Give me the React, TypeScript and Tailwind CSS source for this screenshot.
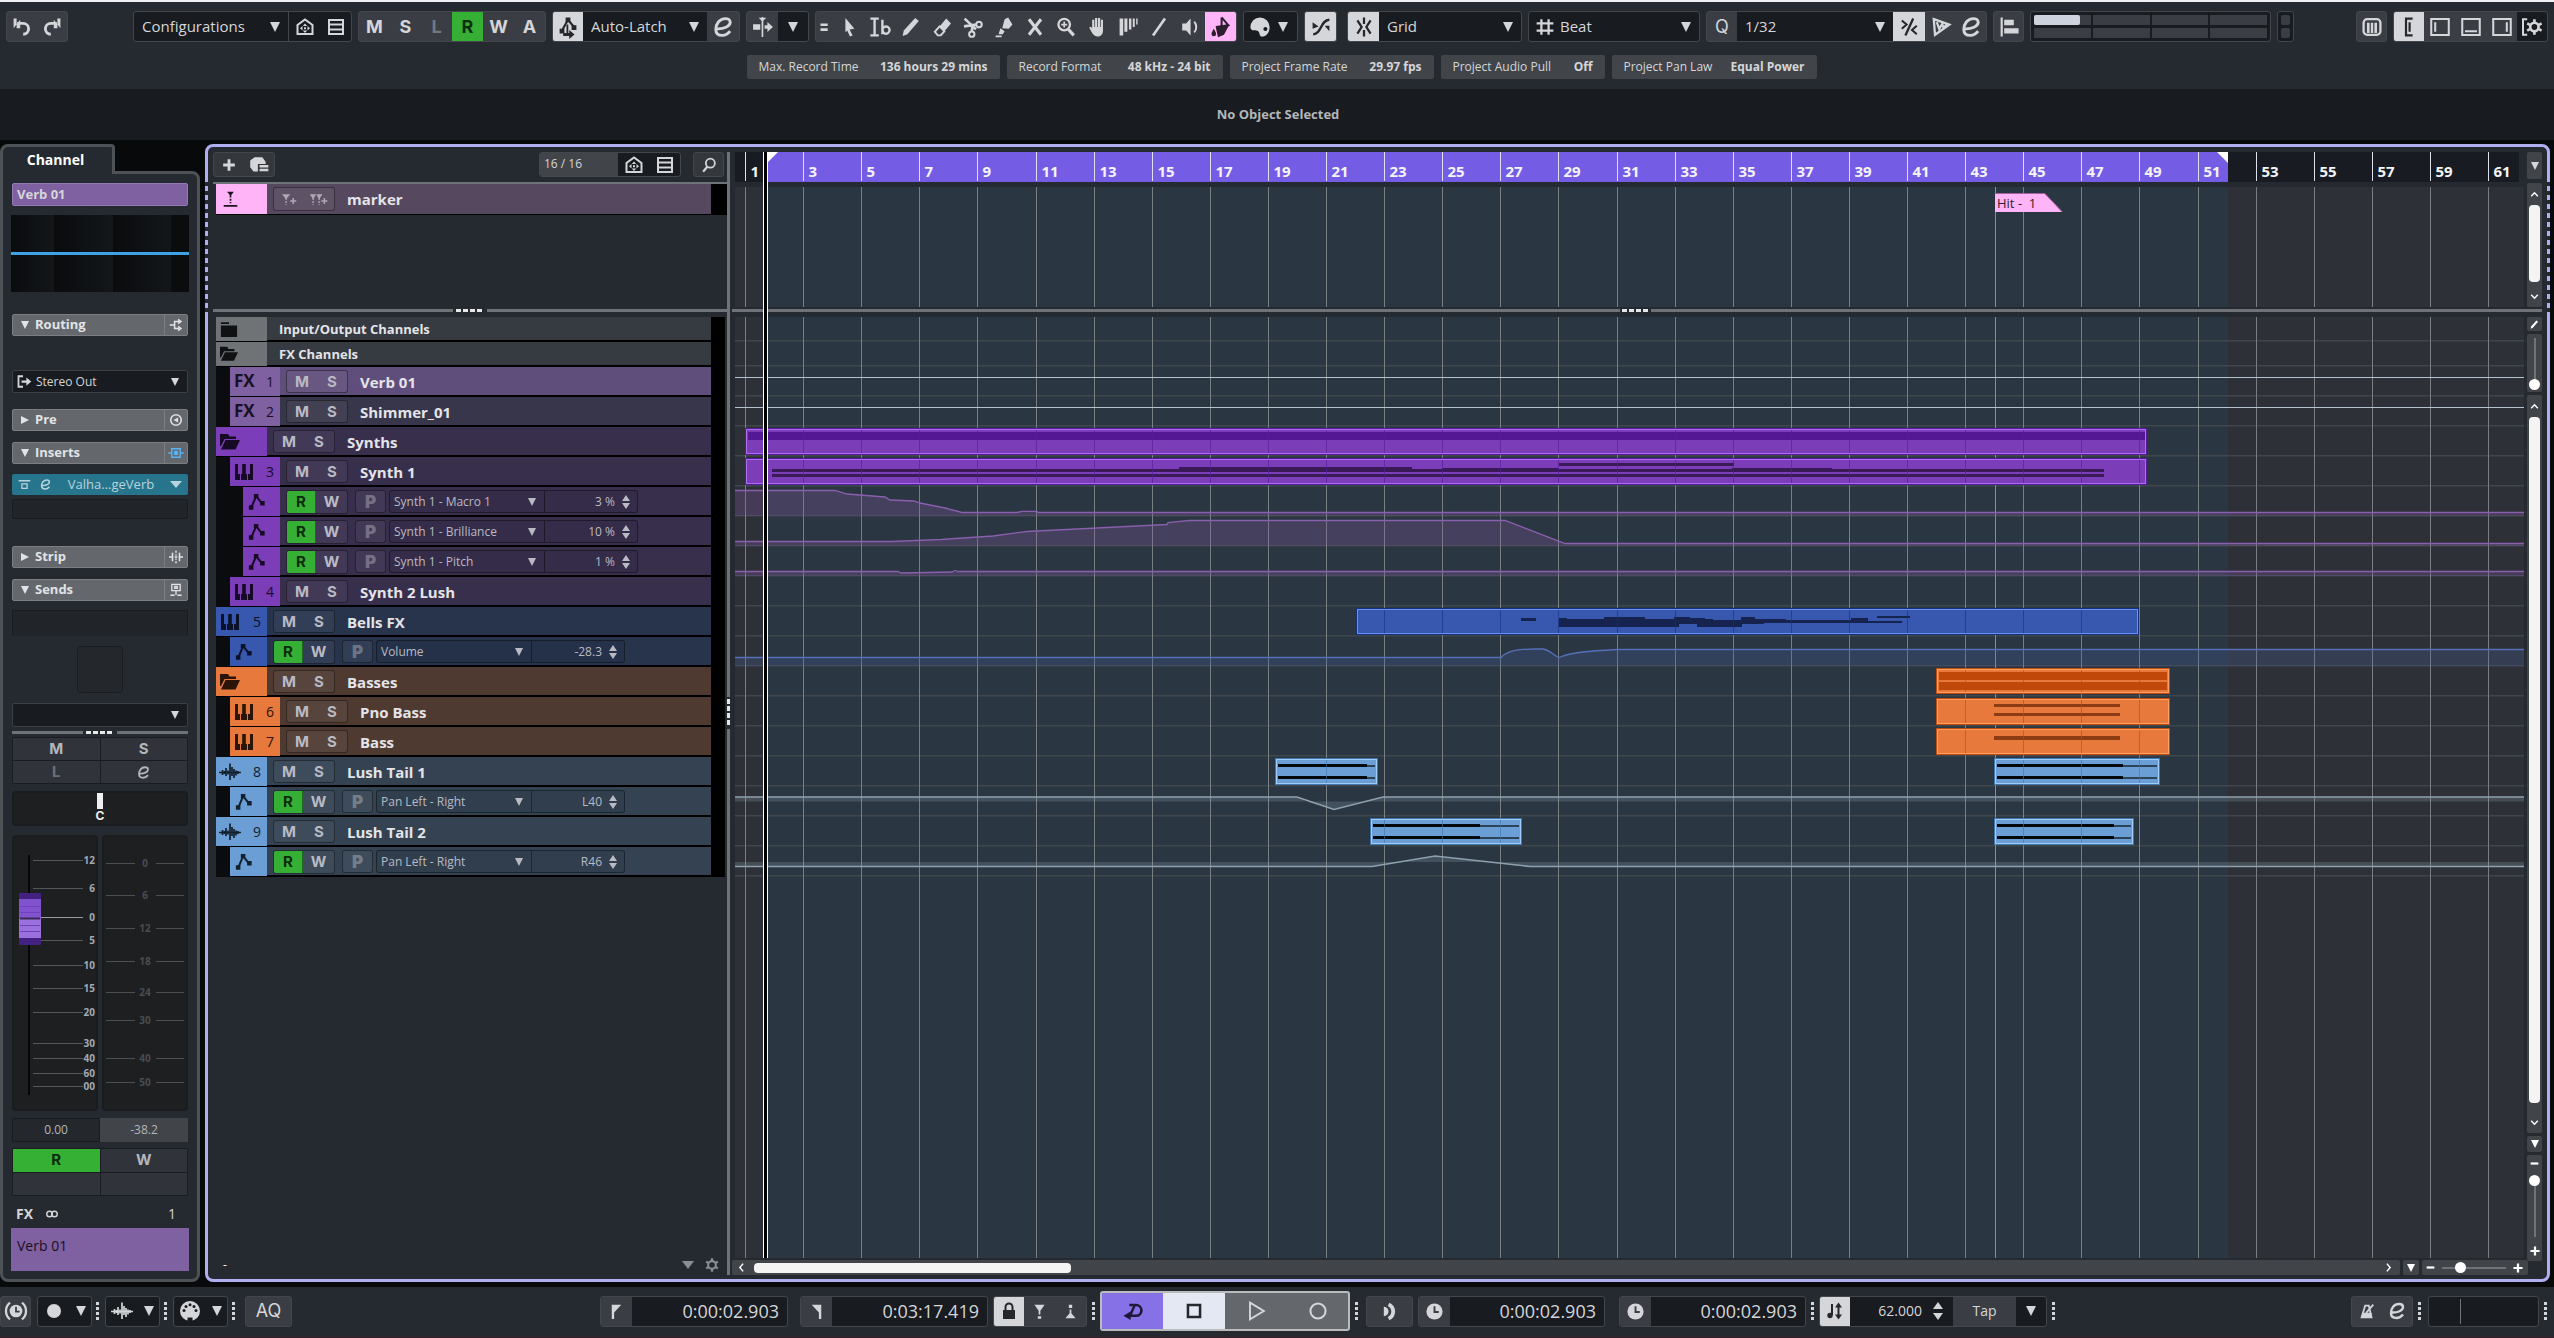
import type { ReactNode } from "react";
import clsx from "clsx";

const BOX = "rounded-[3px] border border-[#43474b] overflow-hidden";

const glyphs: Record<string, ReactNode> = {
  undo: (
    <>
      <path d="M6 7h5a4.500 4.500 0 0 1 0 9" fill="none" stroke="currentColor" strokeWidth="2.400" />
      <path d="M8.500 4v7H3z M3 3v8h2.500V3z" />
    </>
  ),
  redo: (
    <>
      <path d="M14 7H9a4.500 4.500 0 0 0 0 9" fill="none" stroke="currentColor" strokeWidth="2.400" />
      <path d="M11.500 4v7H17z M17 3v8h-2.500V3z" />
    </>
  ),
  agents: (
    <>
      <path d="M2.500 17V8L10 2.500 17.500 8v9z" fill="none" stroke="currentColor" strokeWidth="2" />
      <path d="M10 6.500l2.200 2.500H7.800zM10 16l2.200-2.500H7.800zM5 11.300l2.500-2.200v4.400zM15 11.300l-2.500-2.200v4.400zM9 10.300h2v2H9z" />
    </>
  ),
  list: (
    <path d="M3 3h14v14H3zM3 7.500h14M3 12.500h14" fill="none" stroke="currentColor" strokeWidth="2" />
  ),
  metro: (
    <>
      <path d="M5 13l5-9 5 6" fill="none" stroke="currentColor" strokeWidth="1.800" />
      <path d="M8 2h4v4H8zM3 11.500h4v4H3zM13 8.500h4v4h-4z" />
      <path d="M9.500 8v7" stroke="currentColor" strokeWidth="1.500" />
      <path d="M6 15h5v-2.500l4.500 3.700L11 20v-2.500H6z" />
    </>
  ),
  edit: (
    <path
      d="M4.500 11.500c6 .5 11.500-2 11.500-5.500 0-2-2-3-4-3-5 0-8 4.500-8 9 0 3 2 5 5.500 5 2.500 0 4.500-1 6.500-3.500"
      fill="none"
      stroke="currentColor"
      strokeWidth="2.400"
    />
  ),
  scroll: (
    <>
      <path d="M9.500 1v18" stroke="currentColor" strokeWidth="1.500" />
      <path d="M1 7.500h6.500v5H1zM11.500 8.500H14V5.500l5 4.500-5 4.500v-3h-2.500zM6 1.500h7L9.500 5z" />
    </>
  ),
  menu: <path d="M5 6h8v3H5zM5 11.500h8v3H5z" />,
  arrow: <path d="M7 2.500l7.500 9-4 .5 2.500 5-2.200 1-2.300-5L7 14.500z" />,
  range: (
    <>
      <path d="M2 3h7M2 17h7M5.500 3v14" fill="none" stroke="currentColor" strokeWidth="2" />
      <path d="M12 4v12M12 12.500a3 3 0 1 1 0 .1" fill="none" stroke="currentColor" strokeWidth="2" />
    </>
  ),
  pencil: <path d="M3 17.500l1-4.500L13.500 2.500l3 2.500L7 16z" />,
  erase: (
    <>
      <path d="M8 9.500L13.500 3l4 4-5.500 6.500z" />
      <path d="M8 9.500l-4 4.500 2.500 3H9l3-3.500z" fill="none" stroke="currentColor" strokeWidth="1.600" />
    </>
  ),
  split: (
    <>
      <path d="M3 3l9.500 9M2.500 9.500l10-1.500M9.500 9l-.5 5" stroke="currentColor" strokeWidth="2.200" />
      <circle cx="15" cy="8" r="2.300" fill="none" stroke="currentColor" strokeWidth="1.700" />
      <circle cx="9" cy="16" r="2.200" fill="none" stroke="currentColor" strokeWidth="1.700" />
    </>
  ),
  glue: <path d="M10.500 3.500L13.500 2l3.500 6-3 3.500-5.500-.5zM7 11l3.500 2.500L9 16H5.500zM3 17h5v1.500H3z" />,
  mute: <path d="M5 3.500l10 13M15 3.500l-10 13" stroke="currentColor" strokeWidth="2.600" />,
  zoom: (
    <>
      <circle cx="8.500" cy="8" r="4.800" fill="none" stroke="currentColor" strokeWidth="1.900" />
      <path d="M12 12l4.500 5" stroke="currentColor" strokeWidth="2.600" />
      <path d="M6 8h5M8.500 5.500v5" stroke="currentColor" strokeWidth="1.400" />
    </>
  ),
  hand: <path d="M6 4h1.800v6h.6V2.500h1.800V10h.6V2.500h1.800V10h.6V4H15v9c0 3-1.500 5-4.500 5C7 18 6 15 3.500 10.500l1.500-.8L6 11z" />,
  comp: <path d="M3 3h3v14H3zM7 3h2.500v11H7zM10.800 3h2v9h-2zM14 3h1.600v7H14zM16.800 3H18v5h-1.200z" />,
  line: <path d="M5 17L15 3" stroke="currentColor" strokeWidth="2.200" />,
  speaker: (
    <>
      <path d="M3.500 7h3.300L10.500 3v14l-3.700-4H3.500z" />
      <path d="M13.500 5.500c2.300 2.500 2.300 6.500 0 9" fill="none" stroke="currentColor" strokeWidth="1.600" />
    </>
  ),
  bucket: (
    <>
      <path d="M10.500 2v6.500M10.500 2l5.500 6.500-10 1.500" fill="none" stroke="currentColor" strokeWidth="1.700" />
      <path d="M5.500 9.500l11.500-1.500-4.500 8.500-5 2zM4 11.500c1 2 1.900 3 1.900 4.300a1.900 1.900 0 1 1-3.800 0C2.100 14.500 3 13.500 4 11.500z" />
    </>
  ),
  palette: (
    <path
      fillRule="evenodd"
      d="M10 2a8 8 0 0 1 8 8c0 5-3 8-6.500 8-2 0-1.500-3-3-4.500-1.500-1-6 .5-6.500-3A8 8 0 0 1 10 2zm4.500 8a1.700 1.700 0 1 0 0 3.400 1.700 1.700 0 0 0 0-3.400z"
    />
  ),
  cross: (
    <>
      <path d="M3.500 16c7 0 6-12 13.500-12" fill="none" stroke="currentColor" strokeWidth="2" />
      <path d="M3 6l5 3.500-5 2zM17 13.500l-4-4.500h4z" />
    </>
  ),
  snap: (
    <path
      d="M10 2v5.500M10 12.500V18M4.500 4.500L8 10l-3.500 5.500M15.500 4.500L12 10l3.500 5.500"
      fill="none"
      stroke="currentColor"
      strokeWidth="1.900"
    />
  ),
  grid: <path d="M7 3.500v13M13 3.500v13M3 7h14M3 13h14" stroke="currentColor" strokeWidth="1.900" />,
  percent: (
    <>
      <path d="M13.500 3L7 17" stroke="currentColor" strokeWidth="1.900" />
      <path d="M4 4.500L8 8l-4 3.500M16.500 9l-4 3.500 4 3.500" fill="none" stroke="currentColor" strokeWidth="1.700" />
    </>
  ),
  iq: (
    <path d="M4 3.500l13 4.500L5 16.500zM6.500 6l2 5.500 2.500-4 1 3 3.500-3" fill="none" stroke="currentColor" strokeWidth="1.900" />
  ),
  align: <path d="M3 2h1.800v16H3zM6 4h8v4.500H6zM6 11h12v4.500H6z" />,
  keys: (
    <>
      <rect x="3" y="3.500" width="14" height="13" rx="3" fill="none" stroke="currentColor" strokeWidth="1.900" />
      <path d="M5.800 6.500H8v8.500H5.800zM9 6.500h2V15H9zM12 6.500h2.200V15H12z" />
    </>
  ),
  zoneBracket: <path d="M13 3H7.500v14H13M10.500 6v8" fill="none" stroke="currentColor" strokeWidth="1.800" />,
  zoneLeft: <path d="M2.700 3.300h14.600v13.400H2.700zM6 6v8" fill="none" stroke="currentColor" strokeWidth="1.700" />,
  zoneBottom: <path d="M2.700 3.300h14.600v13.400H2.700zM5 13.500h10" fill="none" stroke="currentColor" strokeWidth="1.700" />,
  zoneRight: <path d="M2.700 3.300h14.600v13.400H2.700zM14 6v8" fill="none" stroke="currentColor" strokeWidth="1.700" />,
  gear: (
    <>
      <circle cx="10" cy="10" r="4.800" fill="none" stroke="currentColor" strokeWidth="2.600" />
      <path
        d="M10 1.500v3M10 15.500v3M2.600 5.800l2.600 1.500M14.800 12.700l2.600 1.500M2.600 14.200l2.600-1.500M14.800 7.300l2.600-1.500"
        stroke="currentColor"
        strokeWidth="2.800"
      />
    </>
  ),
  setup: (
    <>
      <path d="M6 3.500H2.500v13H6" fill="none" stroke="currentColor" strokeWidth="1.700" />
      <circle cx="12" cy="10" r="3.500" fill="none" stroke="currentColor" strokeWidth="2.200" />
      <path d="M12 3.500V6M12 14v2.500M6 7l2.200 1.200M15.800 11.800L18 13M6 13l2.200-1.200M15.800 8.200L18 7" stroke="currentColor" strokeWidth="2.200" />
    </>
  ),
  plus: <path d="M10 3.500v13M3.500 10h13" stroke="currentColor" strokeWidth="3.200" />,
  minus: <path d="M3 10h14" stroke="currentColor" strokeWidth="4" />,
  preset: <path d="M6 3h7l3 4v2H9v7H5l-3-4V6zM10.500 10h8v2.200h-8zM10.500 13.500h8v2.200h-8z" />,
  search: (
    <>
      <circle cx="11.500" cy="8" r="5" fill="none" stroke="currentColor" strokeWidth="2" />
      <path d="M8 12l-4.500 5.500" stroke="currentColor" strokeWidth="2.400" />
    </>
  ),
  marker: (
    <>
      <path d="M6 1h8l-4 5zM2 16.500h16v2H2z" />
      <path d="M10 5v9.500" stroke="currentColor" strokeWidth="2" strokeDasharray="2.500 1.500" />
    </>
  ),
  addMarker: (
    <>
      <path d="M0 3h11L5.500 9.500z" />
      <path d="M5.500 8v9" stroke="currentColor" strokeWidth="1.700" strokeDasharray="2.500 1.500" />
      <path d="M15 8v8M11 12h8" stroke="currentColor" strokeWidth="2" />
    </>
  ),
  addCycle: (
    <>
      <path d="M-3 3h8.500L1.500 9.500zM5.500 3H14L9.500 9.500z" />
      <path d="M1.500 8v9M9.500 8v9" stroke="currentColor" strokeWidth="1.700" strokeDasharray="2.500 1.500" />
      <path d="M16.500 8v8M12.500 12h8" stroke="currentColor" strokeWidth="2" />
    </>
  ),
  folder: <path d="M1 2.500h9v2H1zM1 6h18v13H1z" />,
  folderOpen: (
    <>
      <path d="M0 2h8l1.500 2.500H16V7H4.500L1 14H0z" />
      <path d="M5.500 8H20l-4.500 9.500H1z" />
    </>
  ),
  piano: <path d="M1 2h3v10h2V18H1zM7 12h1.200V2h3.600v10H13v6H7zM14 12h2V2h3v16h-5z" />,
  node: (
    <>
      <path d="M4 15.500l5-12 6.500 8" fill="none" stroke="currentColor" strokeWidth="2.200" />
      <path d="M6.500 1h5v4.500h-5zM1 13.500h5v5H1zM13.500 9h5v5h-5z" />
    </>
  ),
  wave: (
    <>
      <path d="M-1 10.500h22" stroke="currentColor" strokeWidth="1.400" />
      <path
        d="M2.500 8v5M4.500 9v3M6 6v8M8 8.500v4M10 1.500V18M12 5v9M14 7v9M16 8.500v5M18 9v3"
        stroke="currentColor"
        strokeWidth="1.700"
      />
    </>
  ),
  routing: (
    <path d="M1 10h7M15 5H8v10h7M13 2l4 3-4 3M13 12l4 3-4 3" fill="none" stroke="currentColor" strokeWidth="2.200" />
  ),
  output: (
    <>
      <path d="M8 3H2v14h6" fill="none" stroke="currentColor" strokeWidth="2.400" />
      <path d="M6 8.500h6.500V4.500L19 10l-6.500 5.500v-4H6z" />
    </>
  ),
  pre: (
    <>
      <circle cx="10" cy="10" r="7.500" fill="none" stroke="currentColor" strokeWidth="2.200" />
      <path d="M13 6.500v7L6.500 10z" />
    </>
  ),
  insert: (
    <>
      <path d="M-1 10h5M16 10h5M4 4h12v12H4z" fill="none" stroke="currentColor" strokeWidth="2" />
      <path d="M7 7h6v6H7z" />
    </>
  ),
  strip: (
    <path d="M0 10h4M16 10h4M5 4v12M15 4v12M8 10h4M10 1v3M10 6v2M10 12v2M10 16v3" stroke="currentColor" strokeWidth="2.200" />
  ),
  send: (
    <path d="M4 2h12v9H4zM7 5h6M7 7.500h6M10 11v6M2 17.500h6M12 17.500h6" fill="none" stroke="currentColor" strokeWidth="1.900" />
  ),
  bypass: <path d="M1 3h18v2.200H1zM5 8h10v9H5zM7 10v5h6v-5z" fillRule="evenodd" />,
  link: (
    <>
      <circle cx="6.500" cy="10" r="4" fill="none" stroke="currentColor" strokeWidth="2" />
      <circle cx="13.500" cy="10" r="4" fill="none" stroke="currentColor" strokeWidth="2" />
    </>
  ),
  system: (
    <>
      <circle cx="10" cy="10" r="5.300" />
      <path d="M10 6.500V10.500h3" fill="none" stroke="#3a3e44" strokeWidth="1.500" />
      <path d="M5 3a9 9 0 0 0 0 14M15 3a9 9 0 0 1 0 14" fill="none" stroke="currentColor" strokeWidth="1.900" />
    </>
  ),
  dot: <circle cx="10" cy="10" r="7" />,
  midi: (
    <>
      <circle cx="10" cy="10" r="10" />
      <g fill="#181b1f">
        <circle cx="4" cy="9.500" r="1.500" />
        <circle cx="6" cy="5.500" r="1.500" />
        <circle cx="10" cy="3.700" r="1.500" />
        <circle cx="14" cy="5.500" r="1.500" />
        <circle cx="16" cy="9.500" r="1.500" />
        <path d="M7.500 16.500h5v4h-5z" />
      </g>
    </>
  ),
  locL: <path d="M5 3h10L7.500 11v7H5z" />,
  locR: <path d="M15 3H5l7.500 8v7H15z" />,
  lock: (
    <>
      <path d="M4 9h12v9H4z" />
      <path d="M6.500 9V6a3.500 3.500 0 0 1 7 0v3" fill="none" stroke="currentColor" strokeWidth="2" />
    </>
  ),
  punchIn: <path d="M4 2h12l-5 7v4.500H9V9zM8 15.500h4v3H8z" />,
  punchOut: <path d="M4 18h12l-5-6V7.500H9V12zM8 2h4v4H8z" />,
  loop: (
    <>
      <path d="M7 5h5.500a4.500 4.500 0 0 1 0 9H6" fill="none" stroke="currentColor" strokeWidth="2.200" />
      <path d="M11.500 5L7.500 14" stroke="currentColor" strokeWidth="2" />
      <path d="M8 10.500v7L2 14z" />
    </>
  ),
  stop: <path d="M4.500 4.500h11v11h-11z" fill="none" stroke="currentColor" strokeWidth="2.300" />,
  play: <path d="M5 3l11.500 7L5 17z" fill="none" stroke="currentColor" strokeWidth="1.600" />,
  record: <circle cx="10" cy="10" r="6.300" fill="none" stroke="currentColor" strokeWidth="1.700" />,
  feedback: (
    <>
      <path d="M4 5a5 5 0 0 1 0 10z" />
      <path d="M9 2.500c6.500 3 6.500 12 0 15" fill="none" stroke="currentColor" strokeWidth="4" />
    </>
  ),
  clock: (
    <>
      <circle cx="10" cy="10" r="8.500" />
      <path d="M10 4.500v6h4.500" fill="none" stroke="#3a3e44" strokeWidth="2" />
    </>
  ),
  tempo: (
    <>
      <path d="M7 3v11M13.500 4v12" stroke="currentColor" strokeWidth="2" />
      <circle cx="5" cy="14.500" r="2.700" />
      <path d="M10 6.500h7l-3.500-5zM10 13.500h7l-3.500 5z" />
    </>
  ),
  click: (
    <>
      <path d="M8 4h4l3 13H4zM9 12l8-9" fill="none" stroke="currentColor" strokeWidth="2" />
      <path d="M5 12h10v5H4z" />
    </>
  ),
  up: <path d="M4 13l6-6 6 6" fill="none" stroke="currentColor" strokeWidth="2.600" />,
  down: <path d="M4 7l6 6 6-6" fill="none" stroke="currentColor" strokeWidth="2.600" />,
  left: <path d="M13 3l-6 7 6 7" fill="none" stroke="currentColor" strokeWidth="2.600" />,
  right: <path d="M7 3l6 7-6 7" fill="none" stroke="currentColor" strokeWidth="2.600" />,
};

function Glyph({ name, className = "size-6" }: { name: string; className?: string }) {
  return (
    <svg viewBox="0 0 20 20" className={clsx("shrink-0 overflow-visible", className)} fill="currentColor" aria-hidden="true">
      {glyphs[name]}
    </svg>
  );
}

function Caret({ className = "w-2.5 h-2.5" }: { className?: string }) {
  return (
    <svg viewBox="0 0 10 10" preserveAspectRatio="none" className={clsx("shrink-0", className)} fill="currentColor" aria-hidden="true">
      <path d="M0 0h10L5 10z" />
    </svg>
  );
}

function IconButton({ icon, label, className, size }: { icon: string; label: string; className?: string; size?: string }) {
  return (
    <button aria-label={label} className={clsx("flex h-full items-center justify-center", className ?? "w-[31px]")}>
      <Glyph name={icon} className={size} />
    </button>
  );
}

function Dropdown({ label, value, className, caret }: { label: string; value: string; className?: string; caret?: string }) {
  return (
    <div className={clsx("relative flex items-center", className)}>
      <select aria-label={label} className="h-full w-full appearance-none bg-transparent outline-none">
        <option>{value}</option>
      </select>
      <span className="pointer-events-none absolute right-2">
        <Caret className={caret} />
      </span>
    </div>
  );
}

function Toolbar() {
  const tools = ["arrow", "range", "pencil", "erase", "split", "glue", "mute", "zoom", "hand", "comp", "line", "speaker"];
  return (
    <header className="border-t-2 border-[#eef0f4] bg-[#252a31] pt-[9px] text-[#d5d6d9]">
      <div className="flex h-[31px] gap-[6px] px-[6px] text-[15px]">
        <div className={clsx(BOX, "flex bg-[#3a3e44] mr-[59px]")}>
          <IconButton icon="undo" label="Undo" className="w-[30px]" />
          <IconButton icon="redo" label="Redo" className="w-[30px]" />
        </div>
        <div className={clsx(BOX, "flex bg-[#181b1f]")}>
          <Dropdown label="Configurations" value="Configurations" className="w-[155px] border-r border-[#43474b] pl-2" />
          <IconButton icon="agents" label="Visibility agents" size="size-5" />
          <IconButton icon="list" label="Visibility list" size="size-5" />
        </div>
        <div className={clsx(BOX, "flex bg-[#3a3e44] font-['Inter'] text-lg font-bold")}>
          {["M", "S", "L", "R", "W", "A"].map((key) => (
            <button
              key={key}
              className={clsx("w-[31px]", key === "L" && "text-[#74787d]", key === "R" && "bg-[#35b035] text-[#0d2c0e]")}
            >
              {key}
            </button>
          ))}
        </div>
        <div className={clsx(BOX, "flex bg-[#3a3e44]")}>
          <IconButton icon="metro" label="Automation panel" className="w-[30px] bg-[#d5d6d9] text-[#24272b]" />
          <Dropdown label="Automation mode" value="Auto-Latch" className="w-[124px] bg-[#181b1f] pl-2" />
          <IconButton icon="edit" label="Open automation panel" className="w-[32px]" />
        </div>
        <div className={clsx(BOX, "flex bg-[#3a3e44]")}>
          <IconButton icon="scroll" label="Auto-scroll" className="w-[31px]" size="size-[22px]" />
          <button aria-label="Auto-scroll settings" className="flex w-[30px] items-center justify-center bg-[#181b1f]">
            <Caret />
          </button>
        </div>
        <div className={clsx(BOX, "flex bg-[#3a3e44]")}>
          <IconButton icon="menu" label="Tool menu" className="w-[17px]" size="size-[18px]" />
          {tools.map((tool) => (
            <IconButton key={tool} icon={tool} label={tool} />
          ))}
          <IconButton icon="bucket" label="Color tool" className="w-[31px] bg-[#ffb4f8] text-[#2c1e2c]" />
        </div>
        <div className={clsx(BOX, "flex w-[55px] items-center gap-1.5 bg-[#181b1f] pl-1")}>
          <IconButton icon="palette" label="Color menu" className="w-6" />
          <Caret />
        </div>
        <div className={clsx(BOX, "mr-1 flex bg-[#d5d6d9] text-[#24272b]")}>
          <IconButton icon="cross" label="Auto-crossfades" className="w-[31px]" />
        </div>
        <div className={clsx(BOX, "flex bg-[#181b1f]")}>
          <IconButton icon="snap" label="Snap" className="w-[31px] bg-[#d5d6d9] text-[#24272b]" />
          <Dropdown label="Snap type" value="Grid" className="w-[142px] pl-2" />
        </div>
        <div className={clsx(BOX, "flex bg-[#181b1f]")}>
          <IconButton icon="grid" label="Grid type" className="w-[31px]" />
          <Dropdown label="Grid resolution" value="Beat" className="w-[139px]" />
        </div>
        <div className={clsx(BOX, "flex bg-[#3a3e44]")}>
          <button className="w-[30px] font-['Inter'] text-lg">Q</button>
          <Dropdown label="Quantize preset" value="1/32" className="w-[156px] bg-[#181b1f] pl-2" />
          <IconButton icon="percent" label="Soft quantize" className="w-[32px] bg-[#d5d6d9] text-[#24272b]" />
          <IconButton icon="iq" label="Iterative quantize" />
          <IconButton icon="edit" label="Quantize panel" className="w-[30px]" />
        </div>
        <div className={clsx(BOX, "flex bg-[#3a3e44]")}>
          <IconButton icon="align" label="Align" className="w-[29px]" />
        </div>
        <div className={clsx(BOX, "flex w-[241px] flex-col justify-between bg-[#181b1f] px-[3px] py-[3px]")}>
          {[0, 1].map((row) => (
            <div key={row} className="flex h-[10px] gap-0.5">
              {[0, 1, 2, 3].map((cell) => (
                <div key={cell} className="flex-1 bg-[#3a3e44]">
                  {row === 0 && cell === 0 && <div className="h-full w-[46px] rounded-[2px] bg-[#cdd3de]" />}
                </div>
              ))}
            </div>
          ))}
        </div>
        <div className={clsx(BOX, "flex w-[17px] flex-col justify-between bg-[#181b1f] p-[3px]")}>
          <div className="h-[10px] rounded-[2px] bg-[#3a3e44]" />
          <div className="h-[10px] rounded-[2px] bg-[#3a3e44]" />
        </div>
        <div className={clsx(BOX, "ml-auto flex bg-[#3a3e44]")}>
          <IconButton icon="keys" label="Key editor" className="w-[29px]" />
        </div>
        <div className={clsx(BOX, "flex bg-[#3a3e44]")}>
          <IconButton icon="zoneBracket" label="Left tabs" className="w-[30px] bg-[#d5d6d9] text-[#24272b]" />
          <IconButton icon="zoneLeft" label="Left zone" />
          <IconButton icon="zoneBottom" label="Lower zone" />
          <IconButton icon="zoneRight" label="Right zone" />
          <IconButton icon="setup" label="Set up window layout" className="w-[30px] bg-[#181b1f]" />
        </div>
      </div>
      <StatusLine />
    </header>
  );
}

function StatusLine() {
  const items = [
    { label: "Max. Record Time", value: "136 hours 29 mins", width: "w-[253px]" },
    { label: "Record Format", value: "48 kHz - 24 bit", width: "w-[216px]" },
    { label: "Project Frame Rate", value: "29.97 fps", width: "w-[204px]" },
    { label: "Project Audio Pull", value: "Off", width: "w-[164px]" },
    { label: "Project Pan Law", value: "Equal Power", width: "w-[205px]" },
  ];
  return (
    <dl className="mt-[13px] flex h-[34px] justify-center gap-[7px] pl-[9px] text-xs">
      {items.map((item) => (
        <div key={item.label} className={clsx("flex h-6 items-center justify-between rounded-[2px] bg-[#41454a] px-3 whitespace-nowrap", item.width)}>
          <dt>{item.label}</dt>
          <dd className="font-bold">{item.value}</dd>
        </div>
      ))}
    </dl>
  );
}

function SectionHeader({ title, icon, open, accent }: { title: string; icon: string; open?: boolean; accent?: boolean }) {
  return (
    <div className="flex h-[22px] items-center rounded-[2px] border border-[#7b7f84] bg-[#64686d] text-[13px] font-bold text-[#e2e3e5]">
      <button className="flex flex-1 items-center gap-1.5 pl-2">
        <Caret className={clsx("h-2 w-2", !open && "-rotate-90")} />
        {title}
      </button>
      <span className={clsx("flex h-full w-[23px] items-center justify-center border-l border-[#7b7f84]", accent && "text-[#57b4f5]")}>
        <Glyph name={icon} className="size-[14px]" />
      </span>
    </div>
  );
}

const faderScale = [
  ["12", 25],
  ["6", 53],
  ["0", 82],
  ["5", 105],
  ["10", 130],
  ["15", 153],
  ["20", 177],
  ["30", 208],
  ["40", 223],
  ["60", 238],
  ["00", 251],
] as const;

const meterScale = [
  ["0", 28],
  ["6", 60],
  ["12", 93],
  ["18", 126],
  ["24", 157],
  ["30", 185],
  ["40", 223],
  ["50", 247],
] as const;

function Fader() {
  return (
    <div className="mt-[9px] flex h-[276px] gap-1">
      <div className="relative flex-1 rounded border-2 border-[#1a1c1f] bg-[#1d1f21]">
        <svg className="h-full w-full font-['Open_Sans',sans-serif] text-[10px] font-bold" aria-hidden="true">
          <path d="M15 18v240" stroke="#050607" strokeWidth="2" />
          {faderScale.map(([label, y]) => (
            <g key={label}>
              <path d={`M19 ${y - 1.5}h50`} stroke={label === "0" ? "#9a9da0" : "#55585b"} />
              <text x="81" y={y + 1.5} textAnchor="end" fill="#a3a9b1">
                {label}
              </text>
            </g>
          ))}
          <rect x="5" y="56" width="22" height="52" rx="1" fill="#432180" />
          <rect x="5" y="62" width="22" height="39" fill="#8253ce" />
          <rect x="5" y="82" width="22" height="19" fill="#9a70dc" />
          <path d="M6 69.500h20M6 75.500h20M6 88.500h20M6 94.500h20" stroke="#6f42bb" />
          <path d="M6 81.500h20" stroke="#3a2a55" strokeWidth="2" />
        </svg>
        <input type="range" aria-label="Volume" className="absolute inset-0 h-full w-full opacity-0" />
      </div>
      <div className="flex-1 rounded border-2 border-[#1a1c1f] bg-[#1d1f21]">
        <svg className="h-full w-full font-['Open_Sans',sans-serif] text-[10px] font-bold" aria-hidden="true">
          {meterScale.map(([label, y]) => (
            <g key={label}>
              <path d={`M2 ${y - 1.5}h29M52 ${y - 1.5}h28`} stroke="#4c4f52" />
              <text x="41" y={y + 1.5} textAnchor="middle" fill="#4a4d50">
                {label}
              </text>
            </g>
          ))}
        </svg>
      </div>
    </div>
  );
}

function ChannelPanel() {
  return (
    <aside className="flex w-[200px] shrink-0 flex-col text-[13px] text-[#d5d6d9]">
      <div className="z-10 -mb-[3px] flex h-[30px] w-[115px] items-center justify-center rounded-tl-lg rounded-tr border-[3px] border-b-0 border-[#4d5256] bg-[#252a31] pr-1 pb-0.5 text-sm font-bold text-white">
        Channel
      </div>
      <div className="flex flex-1 flex-col rounded-tr-lg rounded-b-lg border-[3px] border-[#4d5256] bg-[#252a31] px-[9px] pt-[9px]">
        <div className="h-[23px] rounded-[2px] border border-[#9478b3] bg-[#7f60a1] pl-1 text-[13px] leading-5 font-bold">Verb 01</div>
        <svg className="-mx-px mt-[9px] h-[77px]" aria-hidden="true">
          <defs>
            <linearGradient id="eqBand">
              <stop offset="0" stopColor="#090b0d" />
              <stop offset="1" stopColor="#14171a" />
            </linearGradient>
          </defs>
          <rect width="43" height="77" fill="url(#eqBand)" />
          <rect x="43" width="59" height="77" fill="url(#eqBand)" />
          <rect x="102" width="58" height="77" fill="url(#eqBand)" />
          <rect x="160" width="18" height="77" fill="#0a0c0e" />
          <path d="M0 38.500h178" stroke="#3ea2e4" strokeWidth="3" />
        </svg>
        <div className="mt-[22px]">
          <SectionHeader title="Routing" icon="routing" open />
        </div>
        <div className="mt-[34px] flex h-[23px] items-center rounded-[2px] border border-[#3c4044] bg-[#181b1f] pl-1 text-xs">
          <Glyph name="output" className="size-[15px]" />
          <Dropdown label="Output routing" value="Stereo Out" className="h-full flex-1 pl-1" caret="w-2 h-2" />
        </div>
        <div className="mt-4 flex flex-col gap-[11px]">
          <SectionHeader title="Pre" icon="pre" />
          <SectionHeader title="Inserts" icon="insert" open accent />
        </div>
        <div className="mt-2.5 flex h-[21px] items-center gap-2 rounded-[2px] bg-[#26758d] px-[6px] text-xs text-[#b9d3dc]">
          <Glyph name="bypass" className="size-[13px]" />
          <Glyph name="edit" className="size-[13px]" />
          <button className="flex-1 text-center text-[13px]">Valha...geVerb</button>
          <Caret className="h-[7px] w-3" />
        </div>
        <div className="mt-1 h-5 rounded-[2px] border border-[#181b1f] bg-[#212429]" />
        <div className="mt-[27px] flex flex-col gap-[11px]">
          <SectionHeader title="Strip" icon="strip" />
          <SectionHeader title="Sends" icon="send" open />
        </div>
        <div className="mt-[9px] h-[26px] border border-b-0 border-[#181b1f] bg-[#212429]" />
        <div className="mt-2.5 h-[47px] w-[46px] self-center rounded border border-[#191c20] bg-[#24282d]" />
        <Dropdown label="Control link" value="" className="mt-2.5 h-6 rounded-[2px] border border-[#3c4044] bg-[#181b1f]" caret="w-2 h-2" />
        <SplitDots className="mt-1" />
        <div className="mt-[3px] grid h-[47px] grid-cols-2 grid-rows-2 gap-px rounded-[2px] border border-[#181b1f] bg-[#181b1f] font-['Inter'] text-[15px] leading-5 font-bold text-[#b3b6ba]">
          <button className="bg-[#30343a]">M</button>
          <button className="bg-[#30343a]">S</button>
          <button className="bg-[#30343a] text-[#6b6f74]">L</button>
          <IconButton icon="edit" label="Edit channel" className="w-full bg-[#30343a]" size="size-[15px]" />
        </div>
        <div className="mt-[7px] flex h-[35px] flex-col items-center rounded border-2 border-[#1a1c1f] bg-[#1d1f21] font-['Inter'] text-xs leading-[14px] font-bold text-[#eeeff0]">
          <span className="h-4 w-1.5 bg-[#eeeff0]" />C
        </div>
        <Fader />
        <div className="mt-[7px] flex h-6 text-xs text-[#b3b6ba]">
          <input aria-label="Volume value" defaultValue="0.00" className="w-1/2 rounded-l-[2px] border border-[#181b1f] bg-[#24282d] text-center" />
          <output className="flex w-1/2 items-center justify-center bg-[#41454a]">-38.2</output>
        </div>
        <div className="mt-[6px] grid h-[48px] grid-cols-2 grid-rows-2 gap-px rounded-[2px] border border-[#181b1f] bg-[#181b1f] font-['Inter'] text-[15px] leading-5 font-bold text-[#b3b6ba]">
          <button className="bg-[#35b035] text-[#0d2c0e]">R</button>
          <button className="bg-[#30343a]">W</button>
          <span className="bg-[#30343a]" />
          <span className="bg-[#30343a]" />
        </div>
        <div className="flex h-8 items-center gap-3 pt-1 pr-3 pl-1 text-sm">
          <b>FX</b>
          <Glyph name="link" className="size-[14px]" />
          <span className="ml-auto">1</span>
        </div>
        <div className="-mx-px h-[43px] bg-[#7f60a1] pl-1.5 text-sm leading-9 text-[#17101f]">Verb 01</div>
      </div>
    </aside>
  );
}

function SplitDots({ className }: { className?: string }) {
  return (
    <div className={clsx("flex h-[3px] items-center justify-center gap-[3px]", className)}>
      <span className="h-full flex-1 bg-[#6f7276]" />
      <span className="h-full w-7 bg-[repeating-linear-gradient(90deg,#e6e7e9_0_5px,transparent_5px_7px)]" />
      <span className="h-full flex-1 bg-[#6f7276]" />
    </div>
  );
}

type Tone = "neutral" | "fx" | "fxSelected" | "purple" | "blue" | "orange" | "sky";

const tones: Record<Tone, { cell: string; row: string }> = {
  neutral: { cell: "bg-[#707376] text-[#0f1112]", row: "bg-[#363a41]" },
  fx: { cell: "bg-[#7f60a1] text-[#191022]", row: "bg-[#38364a]" },
  fxSelected: { cell: "bg-[#7f60a1] text-[#191022]", row: "bg-[#5f4e7b]" },
  purple: { cell: "bg-[#7b3db8] text-[#170a24]", row: "bg-[#382f4d]" },
  blue: { cell: "bg-[#3857af] text-[#0b1228]", row: "bg-[#28344c]" },
  orange: { cell: "bg-[#e6793b] text-[#2b1408]", row: "bg-[#4f3a32]" },
  sky: { cell: "bg-[#6b9ed4] text-[#13202d]", row: "bg-[#344252]" },
};

interface Track {
  tone: Tone;
  icon: string;
  level: 0 | 1 | 2;
  name: string;
  number?: number;
  value?: string;
}

const tracks: Track[] = [
  { tone: "fxSelected", icon: "FX", level: 1, name: "Verb 01", number: 1 },
  { tone: "fx", icon: "FX", level: 1, name: "Shimmer_01", number: 2 },
  { tone: "purple", icon: "folderOpen", level: 0, name: "Synths" },
  { tone: "purple", icon: "piano", level: 1, name: "Synth 1", number: 3 },
  { tone: "purple", icon: "node", level: 2, name: "Synth 1 - Macro 1", value: "3 %" },
  { tone: "purple", icon: "node", level: 2, name: "Synth 1 - Brilliance", value: "10 %" },
  { tone: "purple", icon: "node", level: 2, name: "Synth 1 - Pitch", value: "1 %" },
  { tone: "purple", icon: "piano", level: 1, name: "Synth 2 Lush", number: 4 },
  { tone: "blue", icon: "piano", level: 0, name: "Bells FX", number: 5 },
  { tone: "blue", icon: "node", level: 1, name: "Volume", value: "-28.3" },
  { tone: "orange", icon: "folderOpen", level: 0, name: "Basses" },
  { tone: "orange", icon: "piano", level: 1, name: "Pno Bass", number: 6 },
  { tone: "orange", icon: "piano", level: 1, name: "Bass", number: 7 },
  { tone: "sky", icon: "wave", level: 0, name: "Lush Tail 1", number: 8 },
  { tone: "sky", icon: "node", level: 1, name: "Pan Left - Right", value: "L40" },
  { tone: "sky", icon: "wave", level: 0, name: "Lush Tail 2", number: 9 },
  { tone: "sky", icon: "node", level: 1, name: "Pan Left - Right", value: "R46" },
];

const FIELD = "rounded-[3px] border border-black/40";

function TrackRow({ track }: { track: Track }) {
  const tone = tones[track.tone];
  const nested = track.value ? track.level === 2 : track.level === 1;
  return (
    <li className="flex h-[30px] bg-black">
      <span className={clsx("shrink-0 bg-[#0b0c0e]", track.level === 0 && "w-0", track.level === 1 && "w-[14px]", track.level === 2 && "w-[27px]")} />
      <span
        className={clsx(
          "mb-px flex shrink-0 items-center justify-between text-sm",
          tone.cell,
          nested ? (track.level === 2 ? "w-[37px]" : "w-[50px]") : track.level === 1 ? "w-[37px]" : "w-[51px]",
          track.value ? "pl-[5px]" : "pl-[4px]",
        )}
      >
        {track.icon === "FX" ? (
          <b className="text-[17px]">FX</b>
        ) : (
          <Glyph name={track.icon} className={track.value ? "size-[18px]" : "size-5"} />
        )}
        {track.number && <span className="pr-[6px]">{track.number}</span>}
      </span>
      <div className={clsx("mb-0.5 flex flex-1 pt-[3px] pl-[6px] text-[#b9bac4]", tone.row)}>
        {track.value ? (
          <>
            <div className={clsx(FIELD, "flex h-6 w-[62px] overflow-hidden bg-white/5 font-['Inter'] text-[15px] font-bold")}>
              <button className="w-[29px] border-r border-black/40 bg-[#35b035] text-[#0d2c0e]">R</button>
              <button className="flex-1">W</button>
            </div>
            <button className={clsx(FIELD, "ml-[7px] h-[23px] w-[31px] bg-white/5 font-['Inter'] text-[17px] leading-5 font-black text-white/30")}>P</button>
            <div className={clsx(FIELD, "ml-[3px] flex h-[23px] w-[249px] bg-black/5 text-xs")}>
              <Dropdown label="Parameter" value={track.name} className="w-[155px] border-r border-black/40 pl-1" caret="w-2 h-2" />
              <input aria-label={`${track.name} value`} defaultValue={track.value} className="w-[70px] bg-transparent text-right" />
              <span className="flex flex-1 flex-col items-center justify-center gap-0.5">
                <Caret className="h-[6px] w-2 rotate-180" />
                <Caret className="h-[6px] w-2" />
              </span>
            </div>
          </>
        ) : (
          <>
            <div className={clsx(FIELD, "flex h-[23px] w-[62px] bg-white/5 font-['Inter'] text-[15px] leading-[21px] font-bold")}>
              <button className="flex-1">M</button>
              <button className="flex-1">S</button>
            </div>
            <span className="pl-3 text-[15px] leading-6 font-bold text-[#e4e4e8]">{track.name}</span>
          </>
        )}
      </div>
      <span className="w-[14px]" />
    </li>
  );
}

function TrackList() {
  return (
    <section className="flex w-[519px] shrink-0 flex-col pt-[5px] pl-[5px]">
      <div className="flex h-[30px] items-start pr-[3px] text-[#d5d6d9]">
        <div className={clsx(BOX, "flex h-[25px] bg-[#34383d]")}>
          <IconButton icon="plus" label="Add track" className="w-[30px]" size="size-[18px]" />
          <IconButton icon="preset" label="Add track using preset" className="w-[30px]" size="size-[22px]" />
        </div>
        <div className={clsx(BOX, "ml-auto flex h-[25px] bg-[#181b1f]")}>
          <span className="w-[78px] bg-[#41454a] pl-1 text-xs leading-[22px]">16 / 16</span>
          <IconButton icon="agents" label="Track visibility agents" size="size-5" />
          <IconButton icon="list" label="Track visibility" size="size-5" />
        </div>
        <div className={clsx(BOX, "ml-[12px] flex h-[25px] bg-[#34383d]")}>
          <IconButton icon="search" label="Find track" size="size-[18px]" className="w-[29px]" />
        </div>
      </div>
      <div className="h-0.5 bg-[#6f7276]" />
      <div className="ml-[3px] flex h-[31px] bg-black">
        <span className="mb-px flex w-[51px] items-center bg-[#ffb4f8] pl-[6px] text-[#1c131c]">
          <Glyph name="marker" className="size-[17px]" />
        </span>
        <div className="mb-px flex flex-1 items-center bg-[#56495f] pl-[6px]">
          <div className={clsx(FIELD, "flex h-6 w-[62px] bg-white/5 text-[#b0a9b5]")}>
            <IconButton icon="addMarker" label="Add marker" className="w-1/2" size="size-[15px]" />
            <IconButton icon="addCycle" label="Add cycle marker" className="w-1/2" size="size-[15px]" />
          </div>
          <span className="pl-3 text-[15px] font-bold text-[#e4e4e8]">marker</span>
        </div>
        <span className="w-[16px]" />
      </div>
      <SplitDots className="mt-[94px]" />
      <ul className="mt-[5px] pl-[3px] pr-[2px]">
        {[
          { name: "Input/Output Channels", icon: "folder" },
          { name: "FX Channels", icon: "folderOpen" },
        ].map((folder) => (
          <li key={folder.name} className="flex h-[25px] bg-black">
            <span className={clsx("mb-px flex w-[51px] items-center pl-[4px]", tones.neutral.cell)}>
              <Glyph name={folder.icon} className="size-[18px]" />
            </span>
            <span className={clsx("mb-0.5 flex-1 pt-px pl-3 text-[13px] leading-[23px] font-bold text-[#e4e4e8]", tones.neutral.row)}>
              {folder.name}
            </span>
            <span className="w-[14px]" />
          </li>
        ))}
        {tracks.map((track, i) => (
          <TrackRow key={i} track={track} />
        ))}
      </ul>
      <div className="mt-auto flex items-center gap-2.5 pr-[7px] pb-0.5 pl-2.5 text-[#8a8d91]">
        <span className="mr-auto text-xs text-white">-</span>
        <Caret className="h-2 w-3" />
        <Glyph name="gear" className="size-4" />
      </div>
    </section>
  );
}

// The timeline starts at ORIGIN_X; two bars are 58.1 wide.
const ORIGIN_X = 735;
const ORIGIN_Y = 317;
const barX = (bar: number) => Math.round(745 + ((bar - 1) / 2) * 58.1) - ORIGIN_X + 0.5;
const oddBars = Array.from({ length: 31 }, (_, i) => i * 2 + 1);

function GridLines({ color = "#797e82" }: { color?: string }) {
  return (
    <>
      {oddBars.map((bar) => (
        <rect key={bar} x={barX(bar) - 0.5} y="0" width="1" height="100%" fill={color} />
      ))}
    </>
  );
}

function LaneBackdrop() {
  return (
    <>
      <rect width="100%" height="100%" fill="#2d3036" />
      <rect x="33" width="1460" height="100%" fill="#2a3642" />
    </>
  );
}

function Ruler() {
  return (
    <svg className="block h-[30px] w-full font-['Open_Sans',sans-serif] text-[15px] font-bold" role="img" aria-label="Bars ruler">
      <rect width="1784" height="30" fill="#181b22" />
      <rect x="32" width="1461" height="30" fill="#745de4" />
      <path d="M32 0h11L32 11zM1493 0h-11l11 11z" fill="#fff" />
      {oddBars.map((bar) => (
        <g key={bar}>
          <rect x={barX(bar) - 0.5} width="1" height="29" fill="#dfe0ee" />
          <text x={barX(bar) + 5} y="25" fill="#f4f4f8">
            {bar}
          </text>
        </g>
      ))}
    </svg>
  );
}

interface ClipProps {
  x: number;
  y: number;
  w: number;
  h?: number;
  fill: string;
  edge: string;
  light: string;
  children?: ReactNode;
}

function Clip({ x, y, w, h = 26, fill, edge, light, children }: ClipProps) {
  return (
    <g>
      <rect x={x} y={y} width={w} height={h} fill={edge} />
      <rect x={x + 1.5} y={y + 1.5} width={w - 3} height={h - 3} fill={fill} stroke={light} />
      {children}
      {oddBars
        .map((bar) => barX(bar) + ORIGIN_X)
        .filter((gx) => gx > x + 3 && gx < x + w - 3)
        .map((gx) => (
          <rect key={gx} x={gx - 0.5} y={y + 2} width="1" height={h - 4} fill={edge} opacity=".6" />
        ))}
    </g>
  );
}

const violet = { fill: "#7b3db8", edge: "#551a9c", light: "#b06cf0" };
const cobalt = { fill: "#3857af", edge: "#16307f", light: "#6a90f0" };
const amber = { fill: "#e6793b", edge: "#bf4b0c", light: "#ff9d63" };
const azure = { fill: "#6b9ed4", edge: "#3f78b0", light: "#9fcdfb" };

function AudioClip({ x, y, w, loud }: { x: number; y: number; w: number; loud: number }) {
  return (
    <Clip x={x} y={y} w={w} h={27} {...azure}>
      {[8, 20].map((dy) => (
        <g key={dy}>
          <rect x={x + 3} y={y + dy - 1} width={w - 6} height="2" fill="#2c4358" />
          <rect x={x + 3} y={y + dy - 2} width={loud} height="3" fill="#05080b" />
        </g>
      ))}
    </Clip>
  );
}

function Arrangement() {
  const laneEdges = [341, 366, ...tracks.map((_, i) => 396 + i * 30)];
  return (
    <svg className="block h-full w-full" role="img" aria-label="Arrangement">
      <LaneBackdrop />
      <g transform={`translate(${-ORIGIN_X} ${-ORIGIN_Y})`}>
        {laneEdges.map((y) => (
          <rect key={y} x={ORIGIN_X} y={y - 1} width="1790" height="1.500" fill="#3f464c" />
        ))}
      </g>
      <GridLines />
      <rect x="1260" width="1" height="100%" fill="#a878b4" />
      <g transform={`translate(${-ORIGIN_X} ${-ORIGIN_Y})`}>
        <path d="M735 377.500H2525M735 407.500H2525" stroke="#b6c3cf" />

        {/* macro, brilliance, pitch */}
        <g fill="#8a5aa8" fillOpacity=".28" stroke="none">
          <path d="M735 490.500H835L847 494 885 497 890 500 914 501 962 513H2525V516H735z" />
          <path d="M735 542H892L941 540 993 536 1027 532 1167 525 1168 523 1189 521H1505L1565 543.500H2525V546H735z" />
          <path d="M735 572H2525V576H735z" />
        </g>
        <g fill="none" stroke="#8a5fae" strokeWidth="1.300">
          <path d="M735 490.500H835L847 494 885 497 890 500 914 501 920 503 930 505 945 508 962 512.500H1017L1022 511.500H1037L1038 512.500H2525" />
          <path d="M735 541.500H892L941 539.500 993 536 1027 531.500 1167 524.500 1168 522.500 1189 520.500H1505L1565 543.500H2525" />
          <path d="M735 571.500H898L901 573 952 572 955 570.500 958 571.500H2525" />
        </g>

        <Clip x={745} y={428} w={1402} h={27} {...violet}>
          <rect x="748" y="432" width="1397" height="8" fill="#551894" />
        </Clip>
        <Clip x={745} y={458} w={1402} h={27} {...violet}>
          <g fill="#391a57">
            <path d="M772 469h407v-2h233v2h30v-1h117v1h173v-1h100v1h272v3H772z" />
            <rect x="772" y="474" width="1332" height="3" />
            <rect x="1559" y="463" width="175" height="3" />
          </g>
        </Clip>

        <Clip x={1356} y={608} w={783} h={27} {...cobalt}>
          <path
            fill="#16234f"
            d="M1521 618h15v3h-15zM1559 618h8v1h37v-2h41v2h29v-2h16v1h15v1h8v1h28v-3h14v2h31v1h65v-2h17v3h34v2h-138v1h-22v3h-45v-3h-18v3h-120zM1877 616h33v2h-33z"
          />
        </Clip>
        <path d="M735 657.500H1501C1508 650 1520 649 1535 649H1543C1550 650 1553 655 1559 657.500C1572 652 1590 651 1617 649.500H2525V666H735z" fill="#4a62a8" fillOpacity=".25" />
        <path d="M735 657.500H1501C1508 650 1520 649 1535 649H1543C1550 650 1553 655 1559 657.500C1572 652 1590 651 1617 649.500H2525" fill="none" stroke="#5570b8" strokeWidth="1.300" />

        <Clip x={1936} y={668} w={234} {...amber}>
          <rect x="1939" y="672" width="228" height="8" fill="#c04808" />
          <rect x="1939" y="682" width="228" height="8" fill="#c04808" />
        </Clip>
        <Clip x={1936} y={698} w={234} h={27} {...amber}>
          <path d="M1994 704h126v3h-126zM1994 713h126v3h-126z" fill="#8c3b12" />
        </Clip>
        <Clip x={1936} y={728} w={234} h={27} {...amber}>
          <path d="M1994 736h126v4h-126z" fill="#8c3b12" />
        </Clip>

        <AudioClip x={1275} y={758} w={103} loud={89} />
        <AudioClip x={1994} y={758} w={166} loud={126} />
        <AudioClip x={1370} y={818} w={152} loud={107} />
        <AudioClip x={1994} y={818} w={140} loud={117} />

        <g fill="#8fa3b5" fillOpacity=".25">
          <path d="M735 797H1297L1306 801.500H735zM1306 801.500L1334 809.500 1362 801.500zM1362 801.500L1383 797H2525V801.500z" />
          <path d="M735 862H2525V867H1530L1435 856 1372 867H735z" />
        </g>
        <g fill="none" stroke="#8fa0ae" strokeWidth="1.600">
          <path d="M735 797H1297L1334 809.500 1383 797H2525" />
          <path d="M735 866.500H1372L1435 856 1530 866.500H2525" />
        </g>
      </g>
    </svg>
  );
}

function VerticalScroll({ className, thumb }: { className?: string; thumb: string }) {
  return (
    <div className={clsx("flex flex-col items-center rounded-[2px] bg-[#41454a] text-white", className)}>
      <button aria-label="Scroll up" className="flex h-[22px] items-center">
        <Glyph name="up" className="size-[11px]" />
      </button>
      <span className={clsx("w-[11px] rounded bg-[#f4f4f4]", thumb)} />
      <button aria-label="Scroll down" className="mt-auto flex h-[22px] items-center">
        <Glyph name="down" className="size-[11px]" />
      </button>
    </div>
  );
}

function Timeline() {
  return (
    <section className="relative flex min-w-0 flex-1 flex-col pt-[5px]">
      <div className="flex gap-[3px] pr-[5px] pl-[5px]">
        <div className="min-w-0 flex-1">
          <Ruler />
          <svg className="mt-[5px] block h-[120px] w-full" role="img" aria-label="Marker track">
            <LaneBackdrop />
            <GridLines />
            <rect x="1260" width="1" height="100%" fill="#a878b4" />
            <path d="M1260 6h49l18 19h-67z" fill="#ffb4f8" />
            <path d="M1260 6.500h50l17 18" fill="none" stroke="#a8629f" />
            <text x="1262" y="21" className="font-['Open_Sans',sans-serif] text-[13px] whitespace-pre" fill="#2c1e2c">
              {"Hit -  1"}
            </text>
          </svg>
        </div>
        <div className="flex w-[15px] flex-col gap-[4px]">
          <button aria-label="Ruler format" className="flex h-[27px] items-center justify-center rounded-[2px] bg-[#41454a] text-[#d5d6d9]">
            <Caret className="h-2 w-2" />
          </button>
          <VerticalScroll className="flex-1" thumb="h-[77px]" />
        </div>
      </div>
      <div className="mt-[2px] flex h-[8px] items-start pr-[5px] pl-0.5">
        <span className="h-[3px] w-[888px] bg-[#6f7276]" />
        <span className="mx-0.5 h-[3px] w-[27px] bg-[repeating-linear-gradient(90deg,#e6e7e9_0_5px,transparent_5px_7px)]" />
        <span className="h-[3px] flex-1 bg-[#6f7276]" />
      </div>
      <div className="flex min-h-0 flex-1 gap-[3px] pr-[5px] pl-[5px]">
        <div className="min-w-0 flex-1 pb-[17px]">
          <Arrangement />
        </div>
        <div className="flex w-[15px] flex-col gap-[3px] pb-[14px] text-white">
          <button aria-label="Edit" className="flex h-[14px] items-center justify-center rounded-[2px] bg-[#41454a]">
            <Glyph name="pencil" className="size-[11px]" />
          </button>
          <div className="relative flex h-[58px] justify-center rounded-[2px] bg-[#41454a] pt-1">
            <span className="h-[46px] w-0.5 bg-[#6f7276]" />
            <span className="absolute bottom-0.5 size-[11px] rounded-full bg-white" />
          </div>
          <VerticalScroll className="flex-1" thumb="h-[686px]" />
          <button aria-label="Track height" className="flex h-4 items-center justify-center rounded-[2px] bg-[#41454a]">
            <Caret className="h-2 w-2" />
          </button>
          <div className="relative flex h-[106px] flex-col items-center justify-between rounded-[2px] bg-[#41454a] py-[3px]">
            <Glyph name="minus" className="size-[11px]" />
            <span className="h-[60px] w-0.5 bg-[#6f7276]" />
            <Glyph name="plus" className="size-3.5" />
            <span className="absolute top-5 size-[11px] rounded-full bg-white" />
            <input type="range" aria-label="Vertical zoom" className="absolute inset-0 h-full w-full opacity-0" />
          </div>
        </div>
      </div>
      <div className="absolute bottom-0 left-0 flex w-full gap-[3px] pr-[19px] pl-[2px] text-white">
        <div className="flex h-[15px] flex-1 items-center rounded-[2px] bg-[#41454a]">
          <button aria-label="Scroll left" className="flex w-[22px] pl-1">
            <Glyph name="left" className="size-[11px]" />
          </button>
          <span className="h-[10px] w-[317px] rounded bg-[#f4f4f4]" />
          <button aria-label="Scroll right" className="mr-1 ml-auto flex w-4 justify-center">
            <Glyph name="right" className="size-[11px]" />
          </button>
        </div>
        <button aria-label="Zoom presets" className="flex w-4 items-center justify-center rounded-[2px] bg-[#41454a]">
          <Caret className="h-2 w-2" />
        </button>
        <div className="relative flex w-[106px] items-center justify-between rounded-[2px] bg-[#41454a] px-[3px]">
          <Glyph name="minus" className="size-[11px]" />
          <span className="h-0.5 w-[64px] bg-[#6f7276]" />
          <Glyph name="plus" className="size-3.5" />
          <span className="absolute left-[33px] size-[11px] rounded-full bg-white" />
          <input type="range" aria-label="Horizontal zoom" className="absolute inset-0 h-full w-full opacity-0" />
        </div>
      </div>
      <div className="pointer-events-none absolute top-[5px] bottom-[17px] left-[33px] w-[5px] border-x border-white bg-black" />
    </section>
  );
}

function Dots() {
  return <span className="h-[18px] w-[3px] bg-[repeating-linear-gradient(#d5d6d9_0_3px,transparent_3px_5px)]" />;
}

function TimeField({ icon, label, value, className }: { icon: string; label: string; value: string; className: string }) {
  return (
    <div className={clsx(BOX, "flex h-full bg-[#181b1f]")}>
      <IconButton icon={icon} label={label} className="w-[31px] bg-[#3a3e44]" size="size-[19px]" />
      <input aria-label={`${label} time`} defaultValue={value} className={clsx("bg-transparent pr-2 text-right text-lg", className)} />
    </div>
  );
}

function TransportBar() {
  return (
    <footer className="flex h-[51px] items-center border-b border-[#3a1a26] bg-[#252a31] pb-0.5 pr-[7px] text-[#d5d6d9]">
      <div className="flex h-[31px] items-center gap-[6px]">
        <div className={clsx(BOX, "h-full bg-[#3a3e44]")}>
          <IconButton icon="system" label="Audio performance" className="w-[29px]" />
        </div>
        {["dot", "wave", "midi"].map((icon) => (
          <div key={icon} className="flex h-full items-center gap-[4px]">
            <button aria-label={icon} className={clsx(BOX, "flex h-full w-[55px] items-center justify-center gap-3 bg-[#181b1f]")}>
              <Glyph name={icon} className="size-5" />
              <Caret />
            </button>
            <Dots />
          </div>
        ))}
        <button className={clsx(BOX, "ml-1 h-full w-[47px] bg-[#3a3e44] font-['Inter'] text-lg")}>AQ</button>
      </div>
      <div className="flex flex-1 items-center justify-center gap-[5px] pl-3">
        <div className="flex h-[31px] gap-[12px]">
          <TimeField icon="locL" label="Left locator" value="0:00:02.903" className="w-[155px]" />
          <TimeField icon="locR" label="Right locator" value="0:03:17.419" className="w-[155px]" />
        </div>
        <div className={clsx(BOX, "flex h-[31px] bg-[#3a3e44]")}>
          <IconButton icon="lock" label="Lock punch points" className="w-[30px] bg-[#d5d6d9] text-[#24272b]" size="size-5" />
          <IconButton icon="punchIn" label="Punch in" size="size-[17px]" />
          <IconButton icon="punchOut" label="Punch out" size="size-[17px]" />
        </div>
        <Dots />
        <div className="flex h-10 overflow-hidden rounded-[3px] border-2 border-[#b9bbbd] bg-[#64686d]">
          <IconButton icon="loop" label="Cycle" className="w-[61px] bg-[#8771e6] text-[#1f1838]" />
          <IconButton icon="stop" label="Stop" className="w-[62px] bg-[#e3e8f2] text-[#24272b]" size="size-[22px]" />
          <IconButton icon="play" label="Play" className="w-[62px]" />
          <IconButton icon="record" label="Record" className="w-[61px]" />
        </div>
        <Dots />
        <div className={clsx(BOX, "ml-[3px] h-[31px] bg-[#3a3e44]")}>
          <IconButton icon="feedback" label="Pre-roll" className="w-[45px]" size="size-[19px]" />
        </div>
        <div className="flex h-[31px] gap-[14px]">
          <TimeField icon="clock" label="Primary display" value="0:00:02.903" className="w-[154px]" />
          <TimeField icon="clock" label="Secondary display" value="0:00:02.903" className="w-[154px]" />
        </div>
        <Dots />
        <div className={clsx(BOX, "flex h-[31px] bg-[#181b1f]")}>
          <IconButton icon="tempo" label="Tempo track" className="w-[30px] bg-[#d5d6d9] text-[#24272b]" size="size-5" />
          <input aria-label="Tempo" defaultValue="62.000" className="w-[72px] bg-transparent text-right text-sm" />
          <span className="flex w-[31px] flex-col items-center justify-center gap-1">
            <Caret className="h-[7px] w-2.5 rotate-180" />
            <Caret className="h-[7px] w-2.5" />
          </span>
          <button className="w-[63px] bg-[#3a3e44] text-sm">Tap</button>
          <button aria-label="Tempo options" className="flex w-[30px] items-center justify-center">
            <Caret />
          </button>
        </div>
        <Dots />
      </div>
      <div className="flex h-[31px] items-center gap-[5px]">
        <div className={clsx(BOX, "flex h-full bg-[#3a3e44]")}>
          <IconButton icon="click" label="Metronome" className="w-[30px]" size="size-[18px]" />
          <IconButton icon="edit" label="Metronome setup" className="w-[30px]" size="size-5" />
        </div>
        <Dots />
        <div className={clsx(BOX, "ml-0.5 h-full w-[111px] bg-[#181b1f] pl-[31px]")}>
          <div className="my-0.5 h-[25px] w-px bg-[#6f7276]" />
        </div>
        <Dots />
      </div>
    </footer>
  );
}

export default function App() {
  return (
    <div className="flex h-screen flex-col overflow-hidden bg-[#08090a] font-['Open_Sans','Noto_Sans',sans-serif] select-none">
      <Toolbar />
      <div className="flex h-[51px] items-center justify-center bg-[#181b1f] pl-0.5 text-[13px] font-bold text-[#b3b6ba]">No Object Selected</div>
      <main className="flex min-h-0 flex-1 gap-[5px] pt-1 pr-1 pb-[5px]">
        <ChannelPanel />
        <div className="relative flex min-w-0 flex-1 rounded-lg border-[3px] border-[#aeaef0] bg-[#252a31] pb-1">
          <TrackList />
          <div className="relative mt-[5px] w-[3px] bg-[#6f7276]">
            <span className="absolute top-[545px] h-[32px] w-[3px] border-y-2 border-[#252a31] bg-[repeating-linear-gradient(#e6e7e9_0_5px,#252a31_5px_7px)]" />
          </div>
          <Timeline />
          <span className="absolute top-[35px] -left-[3px] h-[134px] w-[3px] bg-[repeating-linear-gradient(#252a31_0_4px,transparent_4px_9px)]" />
          <span className="absolute top-[35px] -right-[3px] h-[134px] w-[3px] bg-[repeating-linear-gradient(#252a31_0_4px,transparent_4px_9px)]" />
        </div>
      </main>
      <TransportBar />
    </div>
  );
}
